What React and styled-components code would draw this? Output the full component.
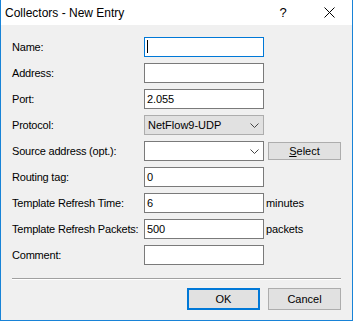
import React from 'react';
import styled, { createGlobalStyle } from 'styled-components';

const GlobalStyle = createGlobalStyle`
  html, body {
    margin: 0;
    padding: 0;
    background: #ffffff;
  }
  * {
    box-sizing: border-box;
  }
`;

const Window = styled.div`
  width: 353px;
  height: 321px;
  display: flex;
  flex-direction: column;
  border: 1px solid #1883d7;
  border-top: none;
  background: #f0f0f0;
  font-family: "Liberation Sans", Arial, sans-serif;
  color: #000;
  overflow: hidden;
`;

const TitleBar = styled.div`
  height: 25px;
  flex: none;
  display: flex;
  align-items: center;
  background: #ffffff;
  padding-left: 4px;
`;

const Title = styled.div`
  flex: 1;
  font-size: 12px;
  color: #000;
  padding-top: 1px;
`;

const TitleButton = styled.div`
  width: ${(p) => p.$w}px;
  height: 25px;
  display: flex;
  align-items: center;
  justify-content: center;
  font-size: 13px;
`;

const Body = styled.div`
  flex: 1;
  display: flex;
  flex-direction: column;
  padding: 12px 11px 10px 11px;
`;

const Form = styled.div`
  display: grid;
  grid-template-columns: 132px 120px auto;
  grid-auto-rows: 20px;
  row-gap: 6px;
  align-items: center;
`;

const Label = styled.div`
  font-size: 11px;
  letter-spacing: -0.2px;
  white-space: nowrap;
  line-height: 20px;
`;

const TextBox = styled.div`
  height: 20px;
  border: 1px solid ${(p) => (p.$focused ? '#0078d7' : '#7a7a7a')};
  background: #fff;
  font-size: 11px;
  letter-spacing: -0.1px;
  line-height: 18px;
  padding: 0 2px;
  position: relative;

  ${(p) =>
    p.$focused &&
    `
    &::after {
      content: '';
      position: absolute;
      left: 2px;
      top: 2px;
      width: 1px;
      height: 13px;
      background: #000;
    }
  `}
`;

const Combo = styled.div`
  height: 20px;
  display: flex;
  align-items: center;
  justify-content: space-between;
  border: 1px solid ${(p) => (p.$editable ? '#7a7a7a' : '#adadad')};
  background: ${(p) => (p.$editable ? '#ffffff' : '#e1e1e1')};
  font-size: 11px;
  padding: 0 4px 0 3px;
`;

const Chevron = () => (
  <svg width="9" height="5" viewBox="0 0 9 5">
    <path d="M0.5 0.5 L4.5 4.5 L8.5 0.5" fill="none" stroke="#444" strokeWidth="1" />
  </svg>
);

const Unit = styled.div`
  font-size: 11px;
  letter-spacing: -0.1px;
  padding-left: 2px;
`;

const Button = styled.div`
  width: 73px;
  height: ${(p) => p.$h}px;
  margin-left: ${(p) => p.$ml || 0}px;
  display: flex;
  align-items: center;
  justify-content: center;
  background: #e1e1e1;
  border: ${(p) => (p.$default ? '2px solid #0078d7' : '1px solid #adadad')};
  font-size: 11px;
`;

const Separator = styled.div`
  margin-top: 13px;
  border-top: 1px solid #a0a0a0;
  border-bottom: 1px solid #ffffff;
`;

const ButtonRow = styled.div`
  margin-top: 8px;
  display: flex;
  justify-content: flex-end;
  gap: 8px;
`;

const Mnemonic = styled.span`
  text-decoration: underline;
`;

const Spacer = styled.div``;

const rows = [
  { label: 'Name:', field: <TextBox $focused /> },
  { label: 'Address:', field: <TextBox /> },
  { label: 'Port:', field: <TextBox>2.055</TextBox> },
  {
    label: 'Protocol:',
    field: (
      <Combo>
        NetFlow9-UDP
        <Chevron />
      </Combo>
    ),
  },
  {
    label: 'Source address (opt.):',
    field: (
      <Combo $editable>
        <span />
        <Chevron />
      </Combo>
    ),
    extra: (
      <Button $h={18} $ml={4}>
        <span>
          <Mnemonic>S</Mnemonic>elect
        </span>
      </Button>
    ),
  },
  { label: 'Routing tag:', field: <TextBox>0</TextBox> },
  { label: 'Template Refresh Time:', field: <TextBox>6</TextBox>, extra: <Unit>minutes</Unit> },
  { label: 'Template Refresh Packets:', field: <TextBox>500</TextBox>, extra: <Unit>packets</Unit> },
  { label: 'Comment:', field: <TextBox /> },
];

const CloseIcon = () => (
  <svg width="11" height="11" viewBox="0 0 11 11">
    <path d="M0.5 0.5 L10.5 10.5 M10.5 0.5 L0.5 10.5" stroke="#000" strokeWidth="1" />
  </svg>
);

export default function App() {
  return (
    <>
      <GlobalStyle />
      <Window>
        <TitleBar>
          <Title>Collectors - New Entry</Title>
          <TitleButton $w={46}>?</TitleButton>
          <TitleButton $w={46}>
            <CloseIcon />
          </TitleButton>
        </TitleBar>
        <Body>
          <Form>
            {rows.map((r) => (
              <React.Fragment key={r.label}>
                <Label>{r.label}</Label>
                {r.field}
                {r.extra || <Spacer />}
              </React.Fragment>
            ))}
          </Form>
          <Separator />
          <ButtonRow>
            <Button $h={22} $default>OK</Button>
            <Button $h={22}>Cancel</Button>
          </ButtonRow>
        </Body>
      </Window>
    </>
  );
}
